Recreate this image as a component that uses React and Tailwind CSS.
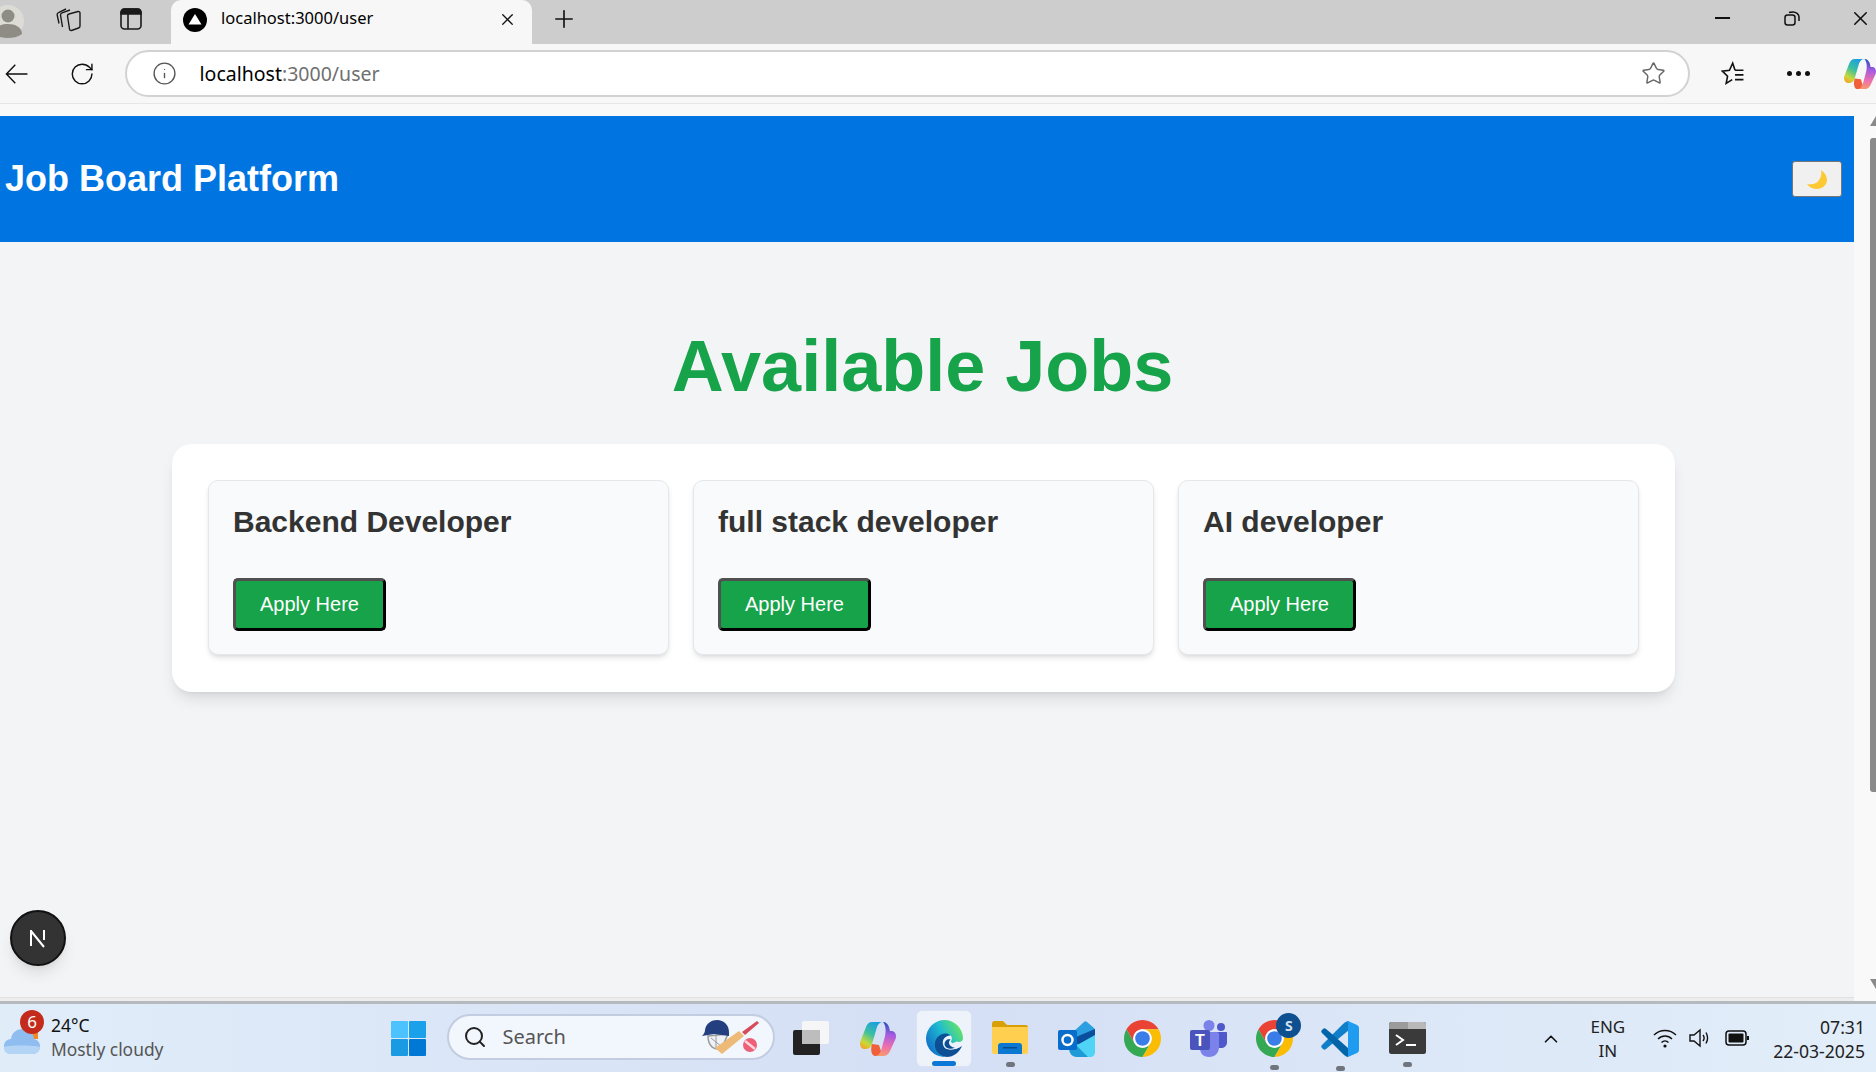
import { useId } from 'react';
import { X, Plus, RotateCw, Star, Info, Search, ChevronUp } from 'lucide-react';

const jobs = ['Backend Developer', 'full stack developer', 'AI developer'];

function Moon() {
  return (
    <svg width="20" height="19" viewBox="0 0 20 19">
      <path d="M14 0 C18 3 20 6 20 10 C20 15 15 19 10 19 C6 19 2 17 0 14 C5 15 10 14 12 10 C14 7 15 4 14 0 Z" fill="#fcc934" />
    </svg>
  );
}

function Copilot({ size = 36 }) {
  const id = useId();
  return (
    <svg width={size} height={size} viewBox="0 0 36 36">
      <defs>
        <linearGradient id={id + 'a'} x1="0.7" y1="0" x2="0.2" y2="1">
          <stop offset="0" stopColor="#1b9de2" />
          <stop offset="0.45" stopColor="#3cc0a0" />
          <stop offset="0.8" stopColor="#c8d93a" />
          <stop offset="1" stopColor="#f5a623" />
        </linearGradient>
        <linearGradient id={id + 'b'} x1="0.5" y1="0" x2="0.4" y2="1">
          <stop offset="0" stopColor="#1f4fc4" />
          <stop offset="0.35" stopColor="#a45ce0" />
          <stop offset="0.7" stopColor="#ec6fb0" />
          <stop offset="1" stopColor="#f79a6c" />
        </linearGradient>
      </defs>
      <path d="M12 1 H23 C20 1 18 3 17 6 L12 23 C11 27 8 28 5 28 C1 28 -1 24 0.5 20 L6 6 C7 3 9 1 12 1 Z" fill={`url(#${id}a)`} />
      <path d="M23 1 C26 1 28 3 29 6 L30 10 H32 C35 10 37 14 35.5 18 L30 30 C29 33 26 35 23 35 H15 C18 35 20 33 21 30 L25 15 C26 10 26 4 23 1 Z" fill={`url(#${id}b)`} />
      <path d="M12 23 L19 24 L21 30 C20 33 18 35 15 35 C12 35 10 30 12 23 Z" fill="#f0603a" />
    </svg>
  );
}

function Chrome({ size = 37 }) {
  return (
    <svg width={size} height={size} viewBox="0 0 48 48">
      <path d="M44.78 12A24 24 0 0 0 3.22 12L13.6 30A12 12 0 0 1 24 12Z" fill="#ea4335" />
      <path d="M3.22 12A24 24 0 0 0 24 48L34.4 30A12 12 0 0 1 13.6 30Z" fill="#34a853" />
      <path d="M24 48A24 24 0 0 0 44.78 12H24A12 12 0 0 1 34.4 30Z" fill="#fbbc04" />
      <circle cx="24" cy="24" r="12" fill="#fff" />
      <circle cx="24" cy="24" r="9.5" fill="#3b7de8" />
    </svg>
  );
}

function Edge() {
  const id = useId();
  return (
    <svg width="37" height="37" viewBox="0 0 36 36">
      <defs>
        <linearGradient id={id} x1="0.1" y1="0.8" x2="0.95" y2="0.3">
          <stop offset="0" stopColor="#1273c9" />
          <stop offset="0.55" stopColor="#20bcd0" />
          <stop offset="1" stopColor="#5fe070" />
        </linearGradient>
      </defs>
      <path d="M18 0 A18 18 0 0 1 36 18 C36 21 33 22 30 21 L18 26 L18 36 A18 18 0 0 1 18 0 Z" fill={`url(#${id})`} />
      <path d="M35 25 C33 31 27 36 20 36 C12 35 7 28 9 21 C11 14 19 11 24 15 C18 15 15 20 17 25 C19 30 28 30 35 25 Z" fill="#0c4f94" />
      <path d="M17 25 C15 20 18 15 24 15 C26 17 25 20 24 21 C26 24 31 25 35 25 C28 30 19 30 17 25 Z" fill="#edf2fb" />
      <path d="M18 24 C18 20 21 18 24 19 C21 21 22 26 28 27 C24 29 19 28 18 24 Z" fill="#0c4f94" />
    </svg>
  );
}

function Folder() {
  return (
    <svg width="36" height="33" viewBox="0 0 36 33">
      <path d="M0 3 C0 1 1 0 2 0 H11 L15 4 H34 C35 4 36 5 36 6 V12 H0 Z" fill="#d9a006" />
      <path d="M0 6 H36 V31 C36 32 35 33 34 33 H2 C1 33 0 32 0 31 Z" fill="#ffd04f" />
      <path d="M6 33 V25 C6 23 7 22 9 22 H27 C29 22 30 23 30 25 V33 Z" fill="#0c78d1" />
      <rect x="11" y="26" width="14" height="1.5" fill="#074d8c" />
    </svg>
  );
}

function Outlook() {
  return (
    <svg width="37" height="36" viewBox="0 0 37 36">
      <path d="M14 12 L26 1 C27 0 28 0 29 1 L36 7 C37 8 37 9 37 10 V16 L20 24 H14 Z" fill="#2b9fe0" />
      <path d="M18 16 L37 8 V15 L22 24 L18 22 Z" fill="#0a4f9e" />
      <path d="M12 28 L37 14 V31 C37 34 35 36 32 36 H20 C15 36 12 33 12 28 Z" fill="#4fd4f5" />
      <path d="M11 27 L18 24 L30 36 H19 C14 36 11 32 11 27 Z" fill="#1e9ad6" />
      <rect x="0" y="9" width="19" height="20" rx="2" fill="#0a6ccb" />
      <circle cx="9.5" cy="19" r="5" fill="none" stroke="#fff" strokeWidth="2.4" />
    </svg>
  );
}

function Teams() {
  return (
    <svg width="37" height="37" viewBox="0 0 37 37">
      <circle cx="19" cy="5.5" r="5.5" fill="#7b83eb" />
      <circle cx="31" cy="7" r="4" fill="#5059c9" />
      <path d="M26 12 H36 C36.6 12 37 12.4 37 13 V22 C37 26 34 28 31 28 H26 Z" fill="#5059c9" />
      <path d="M10 12 H27 C28 12 29 13 29 14 V27 C29 33 25 37 19 37 C13 37 10 33 10 28 Z" fill="#7b83eb" />
      <rect x="0" y="10" width="20" height="20" rx="2" fill="#4b53bc" />
      <text x="10" y="25.5" textAnchor="middle" fontSize="16" fontWeight="700" fill="#fff" fontFamily="'Liberation Sans', sans-serif">T</text>
    </svg>
  );
}

function VsCode() {
  return (
    <svg width="38" height="38" viewBox="0 0 38 38">
      <path d="M28 1 V10 L11 24 L5 29 C4 30 3 30 2 29 L1 28 C0 27 0 26 1 25 L22 4 C24 2 26 1 28 1 Z" fill="#0f7fcc" />
      <path d="M27 37 V28 L11 14 L5 9 C4 8 3 8 2 9 L1 10 C0 11 0 12 1 13 L22 34 C24 36 26 37 27 37 Z" fill="#0065a9" />
      <path d="M27 1 L36 5 C37 5.5 38 6.5 38 8 V30 C38 31.5 37 32.5 36 33 L27 37 Z" fill="#1f9cf0" />
    </svg>
  );
}

function Terminal() {
  return (
    <svg width="37" height="32" viewBox="0 0 37 32">
      <rect width="37" height="32" rx="2.5" fill="#3a3a3a" />
      <path d="M0 2.5 C0 1 1 0 2.5 0 H19 V7 H0 Z" fill="#9b9b9b" />
      <path d="M19 0 H34.5 C36 0 37 1 37 2.5 V7 H19 Z" fill="#b9b9b9" />
      <path d="M7 13 L14 18 L7 23" fill="none" stroke="#fff" strokeWidth="2" />
      <rect x="17" y="22" width="10" height="2" fill="#fff" />
    </svg>
  );
}

function Dot() {
  return <div className="w-[9px] h-[5px] rounded-full bg-[#70757d] mx-auto mt-[8px]" />;
}

function BrowserTabs() {
  return (
    <div className="h-[44px] bg-[#cdcdcd] flex relative">
      <div className="w-[24px] h-[36px] mt-[3px] overflow-hidden">
        <svg width="24" height="36" viewBox="0 0 24 36">
          <circle cx="8" cy="18" r="16" fill="#dcdbd6" />
          <circle cx="8" cy="13" r="6.5" fill="#8f8c85" />
          <path d="M-6 31 C-6 24 1 21 8 21 C15 21 22 24 22 31 C18 34 12 35 8 35 C3 35 -2 34 -6 31 Z" fill="#8f8c85" />
        </svg>
      </div>
      <svg className="ml-[32px] mt-[7px]" width="25" height="25" viewBox="0 0 25 25" fill="none" stroke="#1a1a1a" strokeWidth="1.4">
        <path d="M13 7 L22 4.5 C23 4.3 24 5 24 6 V19 C24 20 23.5 20.7 22.5 21 L15.5 23.5 C14.5 23.8 13.5 23 13.5 22 L11.5 9 C11.4 8 12 7.3 13 7 Z" />
        <path d="M6.5 20 L4.5 8 C4.4 7 5 6.2 6 5.8 L14 3" />
        <path d="M3 16.5 L1.2 8 C1 7 1.5 6 2.5 5.6 L10 2" />
      </svg>
      <svg className="ml-[39px] mt-[8px]" width="22" height="22" viewBox="0 0 22 22" fill="none" stroke="#1a1a1a" strokeWidth="1.6">
        <rect x="1" y="1" width="20" height="20" rx="3.5" />
        <path d="M8 6 V21" />
        <path d="M1 5 C1 2.5 2.5 1 4.5 1 H17.5 C19.5 1 21 2.5 21 5 V6 H1 Z" fill="#1a1a1a" />
      </svg>
      <div className="ml-[29px] w-[361px] h-[44px] bg-[#f7f7f7] rounded-t-[10px] flex items-center">
        <svg className="ml-[12px] mb-[5px]" width="24" height="24" viewBox="0 0 24 24">
          <circle cx="12" cy="12" r="12" fill="#000" />
          <path d="M12 6 L18.5 16.5 H5.5 Z" fill="#fff" />
        </svg>
        <span className="ml-[14px] mb-[7px] text-[16.5px] text-black whitespace-nowrap font-['Noto_Sans',sans-serif]">localhost:3000/user</span>
        <X className="ml-auto mr-[15px] mb-[5px]" size={19} strokeWidth={1.6} color="#111" />
      </div>
      <Plus className="ml-[18px] mt-[5px]" size={28} strokeWidth={1.4} color="#111" />
      <div className="ml-auto flex items-start">
        <div className="mt-[17px] w-[15px] h-[2px] bg-[#111]" />
        <svg className="ml-[54px] mt-[11px]" width="16" height="15" viewBox="0 0 16 15" fill="none" stroke="#111" strokeWidth="1.5">
          <rect x="1" y="4" width="10" height="10" rx="2.5" />
          <path d="M5 1.5 C6 1 7 1 9 1 C12 1 15 3 15 6 V10" />
        </svg>
        <X className="ml-[49px] mr-[4px] mt-[7px]" size={23} strokeWidth={1.6} color="#111" />
      </div>
    </div>
  );
}

function BrowserToolbar() {
  return (
    <div className="h-[60px] bg-[#f7f7f7] border-b border-[#e6e6e6] flex items-center">
      <svg className="ml-[5px]" width="25" height="22" viewBox="0 0 25 22" fill="none" stroke="#111" strokeWidth="1.5">
        <path d="M24 11 H1.5 M11 1 L1.5 11 L11 21" />
      </svg>
      <RotateCw className="ml-[41px]" size={28} strokeWidth={1.3} color="#111" />
      <div className="ml-[29px] w-[1565px] h-[47px] bg-white border-2 border-[#d2d2d2] rounded-full flex items-center shrink-0">
        <Info className="ml-[25px]" size={25} strokeWidth={1.3} color="#555" />
        <span className="ml-[23px] mt-[1px] text-[19.5px] text-black whitespace-nowrap font-['Noto_Sans',sans-serif]">
          localhost<span className="text-[#6f6f6f]">:3000/user</span>
        </span>
        <Star className="ml-auto mr-[22px]" size={25} strokeWidth={1.4} color="#666" />
      </div>
      <svg className="ml-[31px]" width="25" height="25" viewBox="0 0 25 25" fill="none" stroke="#111" strokeWidth="1.7">
        <path d="M15 9 L12.5 1.5 L9 9 L1.5 10 L7 15.5 L5.5 23 L12 19" />
        <path d="M15 9 H24 M15 14 H24 M15 19 H24" />
      </svg>
      <div className="ml-[43px] flex gap-[4px]">
        <div className="w-[5px] h-[5px] rounded-full bg-[#111]" />
        <div className="w-[5px] h-[5px] rounded-full bg-[#111]" />
        <div className="w-[5px] h-[5px] rounded-full bg-[#111]" />
      </div>
      <div className="ml-[34px]">
        <Copilot size={32} />
      </div>
    </div>
  );
}

function JobCard({ title }) {
  return (
    <div className="flex-1 h-[175px] bg-[#f9fafb] border border-[#e5e7eb] rounded-[10px] shadow-md px-[24px] pt-[21px]">
      <h3 className="text-[30px] leading-[40px] font-bold text-[#333]">{title}</h3>
      <button className="mt-[36px] w-[153px] h-[53px] pb-[2px] bg-[#16a34a] border-[3px] border-t-[#505050] border-l-[#505050] border-r-black border-b-black rounded-[5px] text-[20px] text-white">
        Apply Here
      </button>
    </div>
  );
}

function Taskbar() {
  return (
    <div className="h-[71px] border-t-[3px] border-[#b6babf] bg-linear-to-r from-[#e0edf9] via-[#d5dff5] to-[#e2eef9] flex items-start relative font-['Noto_Sans',sans-serif]">
      <div className="relative w-[51px] h-[68px]">
        <svg className="absolute left-[4px] top-[17px]" width="36" height="33" viewBox="0 0 36 33">
          <path d="M22 8 H34 V18 H22 Z" fill="#f08a24" />
          <path d="M7 33 C2 33 0 29 0 25 C0 21 3 18 7 18 C8 11 13 8 19 8 C25 8 30 12 30 18 C34 19 36 22 36 25 C36 29 33 33 29 33 Z" fill="#8fbdf0" />
          <path d="M0 26 C4 24 30 24 36 26 C36 30 33 33 29 33 H7 C2 33 0 30 0 26 Z" fill="#b4d4f6" />
        </svg>
        <div className="absolute left-[20px] top-[6px] w-[24px] h-[24px] rounded-full bg-[#c42b1c] text-white text-[17px] flex items-center justify-center">6</div>
      </div>
      <div className="pt-[9px] whitespace-nowrap">
        <div className="text-[17.5px] leading-[24px] text-[#111]">24°C</div>
        <div className="text-[17.4px] leading-[24px] text-[#555]">Mostly cloudy</div>
      </div>
      <svg className="ml-[228px] mt-[17px]" width="35" height="35" viewBox="0 0 35 35">
        <rect width="17" height="17" rx="1" fill="#4cc2ff" />
        <rect x="18" width="17" height="17" rx="1" fill="#1ba1ea" />
        <rect y="18" width="17" height="17" rx="1" fill="#1b9ae4" />
        <rect x="18" y="18" width="17" height="17" rx="1" fill="#0078d4" />
      </svg>
      <div className="ml-[21px] mt-[10px] w-[328px] h-[46px] rounded-full bg-[#f2f6fd] border-2 border-[#c3cce0] flex items-center">
        <Search className="ml-[14px]" size={24} strokeWidth={2} color="#222" />
        <span className="ml-[15px] text-[20px] text-[#555]">Search</span>
        <svg className="ml-auto mr-[13px]" width="58" height="36" viewBox="0 0 58 36">
          <path d="M6 17 C6 25 10 30 16 30 L22 24 L26 15 Z" fill="#eef1f5" stroke="#9a9a9a" strokeWidth="1.5" />
          <path d="M9 19 L20 28 M14 17 L14 30" stroke="#9a9a9a" strokeWidth="1" />
          <path d="M0 17 C2 15 3 13 3 11 C4 4 10 1 15 1 C22 1 27 6 27 13 V17 L12 15 Z" fill="#233f80" />
          <path d="M13 29 L37 12 L42 17 L20 35 Z" fill="#eeba78" />
          <path d="M40 13 L55 2 L57 4 L43 16 Z" fill="#d64a5a" />
          <circle cx="48" cy="26" r="7" fill="#ee5f78" />
          <path d="M43 22 L53 30" stroke="#ffd7de" strokeWidth="2.5" />
        </svg>
      </div>
      <svg className="ml-[18px] mt-[17px]" width="37" height="34" viewBox="0 0 37 34">
        <rect x="0" y="9" width="27" height="25" rx="2" fill="#222" />
        <rect x="9" y="0" width="27" height="23" rx="2" fill="#f6f6f6" />
        <rect x="9" y="9" width="18" height="14" fill="#bdbdbd" />
      </svg>
      <div className="ml-[30px] mt-[17px]">
        <Copilot size={36} />
      </div>
      <div className="ml-[20px] mt-[6px] w-[56px] h-[57px] rounded-md bg-[#edf2fb] border border-[#dbe2f0] flex flex-col items-center relative">
        <div className="mt-[9px]">
          <Edge />
        </div>
        <div className="absolute bottom-0 w-[24px] h-[5px] rounded-full bg-[#0a78d4]" />
      </div>
      <div className="ml-[20px] mt-[17px]">
        <Folder />
        <Dot />
      </div>
      <div className="ml-[30px] mt-[17px]">
        <Outlook />
      </div>
      <div className="ml-[29px] mt-[16px]">
        <Chrome />
      </div>
      <div className="ml-[29px] mt-[16px]">
        <Teams />
      </div>
      <div className="ml-[29px] mt-[16px] relative">
        <Chrome />
        <Dot />
        <div className="absolute left-[20px] top-[-7px] w-[25px] h-[25px] rounded-full bg-[#0d4f8f] text-[#cfe0f2] text-[14px] font-bold flex items-center justify-center">S</div>
      </div>
      <div className="ml-[28px] mt-[16px]">
        <VsCode />
        <Dot />
      </div>
      <div className="ml-[30px] mt-[18px]">
        <Terminal />
        <Dot />
      </div>
      <ChevronUp className="ml-[114px] mt-[24px]" size={22} strokeWidth={1.8} color="#111" />
      <div className="ml-[28px] pt-[11px] text-center text-[17px] leading-[24px] text-[#222]">
        <div>ENG</div>
        <div>IN</div>
      </div>
      <svg className="ml-[28px] mt-[24px]" width="24" height="20" viewBox="0 0 24 20" fill="none" stroke="#111" strokeWidth="1.4">
        <path d="M1 7 C7 1 17 1 23 7 M5 11 C9 7 15 7 19 11 M8.5 14.5 C10.5 12.5 13.5 12.5 15.5 14.5" />
        <circle cx="12" cy="18" r="1.6" fill="#111" stroke="none" />
      </svg>
      <svg className="ml-[12px] mt-[24px]" width="24" height="20" viewBox="0 0 24 20" fill="none" stroke="#111" strokeWidth="1.4">
        <path d="M1 7 H5 L11 2 V18 L5 13 H1 Z" />
        <path d="M14 7 C15.5 9 15.5 11 14 13 M17 4.5 C19 8 19 12 17 15.5" />
      </svg>
      <svg className="ml-[12px] mt-[26px]" width="24" height="16" viewBox="0 0 24 16" fill="none" stroke="#111" strokeWidth="1.5">
        <rect x="1" y="1" width="20" height="14" rx="3" />
        <rect x="3.5" y="3.5" width="15" height="9" rx="1" fill="#111" stroke="none" />
        <path d="M23 6 V10" strokeWidth="2" />
      </svg>
      <div className="ml-auto mr-[11px] pt-[11px] text-right text-[17.6px] leading-[24px] text-[#222] whitespace-nowrap">
        <div>07:31</div>
        <div>22-03-2025</div>
      </div>
    </div>
  );
}

export default function App() {
  return (
    <div className="h-screen w-full flex flex-col overflow-hidden bg-[#f3f4f6] font-['Liberation_Sans',Arial,sans-serif]">
      <BrowserTabs />
      <BrowserToolbar />
      <div className="flex-1 flex min-h-0">
        <div className="flex-1 flex flex-col relative">
          <div className="h-[12px] bg-[#f9f9f9]" />
          <header className="h-[126px] bg-[#0075e1] flex items-center justify-between pl-[5px] pr-[12px]">
            <h1 className="text-[36px] font-bold text-white">Job Board Platform</h1>
            <button className="w-[50px] h-[36px] bg-[#f0f0f0] border border-[#767676] rounded-[3px] flex items-center justify-center">
              <Moon />
            </button>
          </header>
          <main className="flex-1 pl-[172px] pr-[179px] pt-[82px]">
            <h2 className="text-[72px] leading-[84px] font-bold text-[#16a34a] text-center -ml-[2px]">Available Jobs</h2>
            <div className="mt-[36px] h-[248px] bg-white rounded-[20px] shadow-lg p-[36px] flex gap-[24px]">
              {jobs.map((job) => (
                <JobCard key={job} title={job} />
              ))}
            </div>
          </main>
          <div className="h-[4px] bg-[#ededed] border-t border-[#e0e0e0]" />
          <div className="absolute left-[10px] bottom-[35px] w-[56px] h-[56px] rounded-full bg-[#333] border-2 border-[#111] shadow-lg flex items-center justify-center">
            <svg width="20" height="20" viewBox="0 0 20 20" fill="none" stroke="#fff" strokeWidth="2">
              <path d="M3 2 V18 M3 3 L16 19 M16 2 V12" />
            </svg>
          </div>
        </div>
        <div className="w-[22px] bg-[#f9f9f9] flex flex-col items-end pt-[12px]">
          <div className="w-0 h-0 border-l-[6px] border-r-[6px] border-b-[10px] border-l-transparent border-r-transparent border-b-[#8a8a8a] -mr-[6px]" />
          <div className="w-[6px] h-[654px] mt-[12px] bg-[#8a8a8a] rounded-l-[3px]" />
          <div className="w-0 h-0 mt-auto mb-[12px] border-l-[6px] border-r-[6px] border-t-[10px] border-l-transparent border-r-transparent border-t-[#8a8a8a] -mr-[6px]" />
        </div>
      </div>
      <Taskbar />
    </div>
  );
}
